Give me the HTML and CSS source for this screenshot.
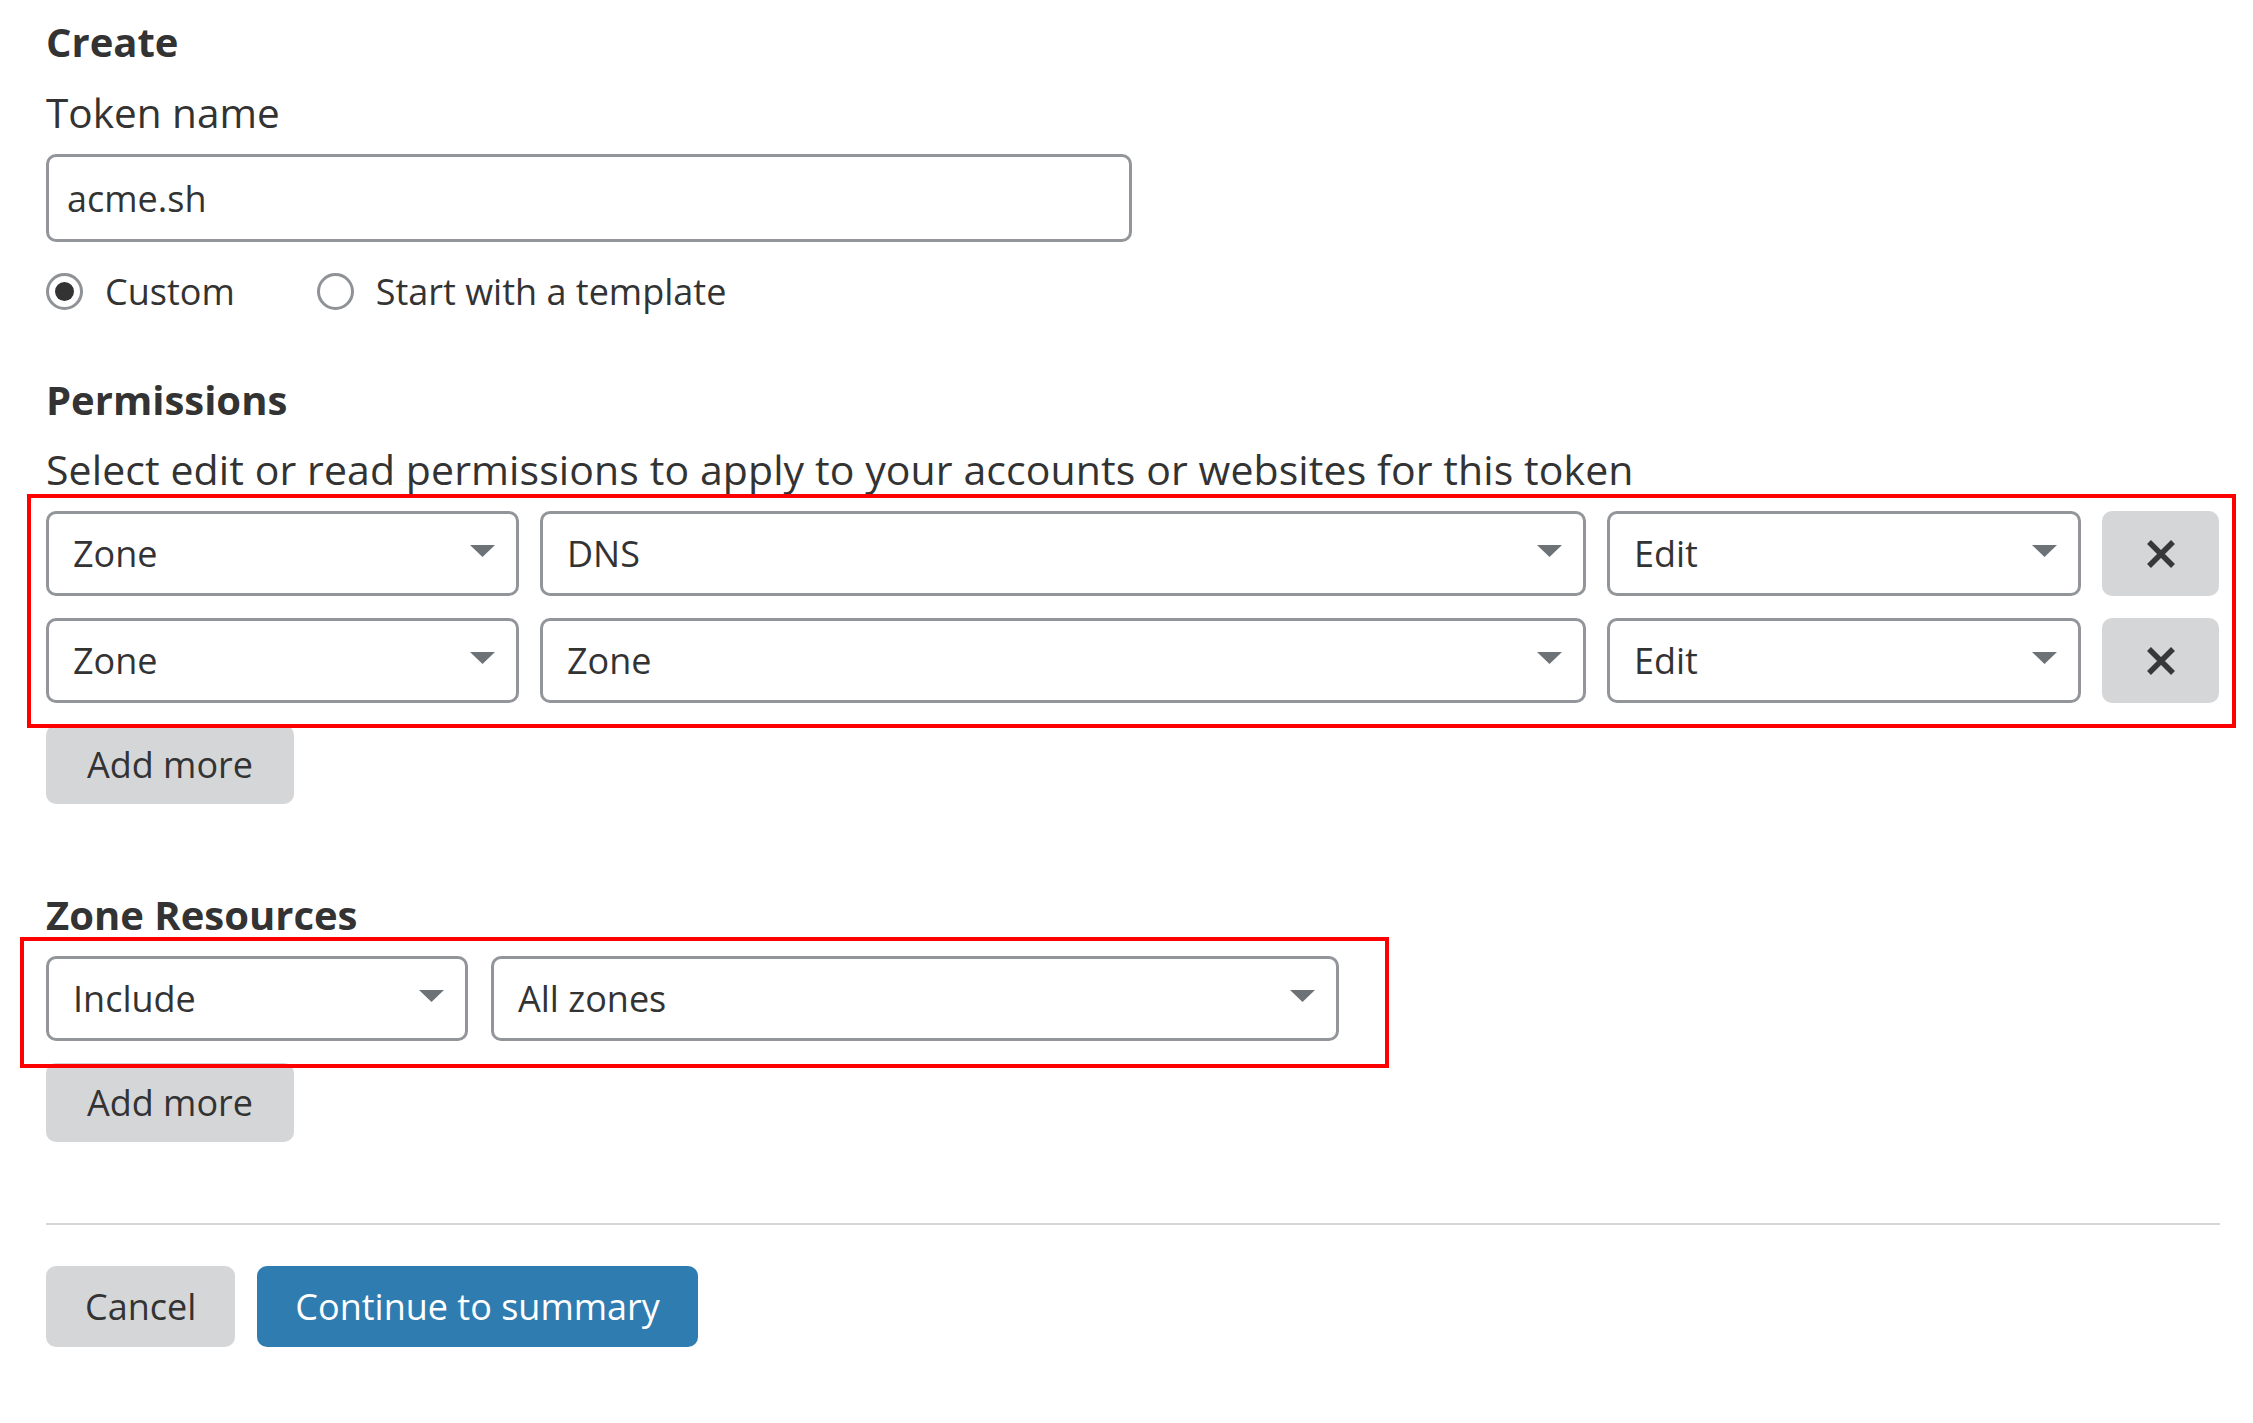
FILE: index.html
```html
<!DOCTYPE html>
<html lang="en">
<head>
<meta charset="utf-8">
<title>Create Token</title>
<link rel="stylesheet" href="styles.css">
</head>
<body>
<main class="page">
  <h2 class="heading heading-create">Create</h2>
  <div class="label">Token name</div>
  <div class="text-input">acme.sh</div>
  <div class="radios">
    <label class="radio"><span class="radio-circle checked"><span class="radio-dot"></span></span><span class="radio-label">Custom</span></label>
    <label class="radio"><span class="radio-circle"></span><span class="radio-label">Start with a template</span></label>
  </div>

  <h2 class="heading heading-perm">Permissions</h2>
  <p class="desc">Select edit or read permissions to apply to your accounts or websites for this token</p>

  <div class="perm-grid annotated annotated-perm">
    <div class="select"><span>Zone</span><svg class="caret" width="25" height="12" viewBox="0 0 25 12"><polygon points="0,0 25,0 12.5,12" fill="#6d7276"/></svg></div>
    <div class="select"><span>DNS</span><svg class="caret" width="25" height="12" viewBox="0 0 25 12"><polygon points="0,0 25,0 12.5,12" fill="#6d7276"/></svg></div>
    <div class="select"><span>Edit</span><svg class="caret" width="25" height="12" viewBox="0 0 25 12"><polygon points="0,0 25,0 12.5,12" fill="#6d7276"/></svg></div>
    <button class="btn-remove" type="button" aria-label="Remove"><svg width="30" height="30" viewBox="0 0 30 30"><path d="M3 3 L27 27 M27 3 L3 27" stroke="#36393a" stroke-width="5.5" fill="none"/></svg></button>

    <div class="select"><span>Zone</span><svg class="caret" width="25" height="12" viewBox="0 0 25 12"><polygon points="0,0 25,0 12.5,12" fill="#6d7276"/></svg></div>
    <div class="select"><span>Zone</span><svg class="caret" width="25" height="12" viewBox="0 0 25 12"><polygon points="0,0 25,0 12.5,12" fill="#6d7276"/></svg></div>
    <div class="select"><span>Edit</span><svg class="caret" width="25" height="12" viewBox="0 0 25 12"><polygon points="0,0 25,0 12.5,12" fill="#6d7276"/></svg></div>
    <button class="btn-remove" type="button" aria-label="Remove"><svg width="30" height="30" viewBox="0 0 30 30"><path d="M3 3 L27 27 M27 3 L3 27" stroke="#36393a" stroke-width="5.5" fill="none"/></svg></button>
  </div>
  <button class="btn btn-gray btn-add" type="button">Add more</button>

  <h2 class="heading heading-zone">Zone Resources</h2>
  <div class="zone-grid annotated annotated-zone">
    <div class="select"><span>Include</span><svg class="caret" width="25" height="12" viewBox="0 0 25 12"><polygon points="0,0 25,0 12.5,12" fill="#6d7276"/></svg></div>
    <div class="select"><span>All zones</span><svg class="caret" width="25" height="12" viewBox="0 0 25 12"><polygon points="0,0 25,0 12.5,12" fill="#6d7276"/></svg></div>
  </div>
  <button class="btn btn-gray btn-add" type="button">Add more</button>

  <hr class="divider">

  <div class="actions">
    <button class="btn btn-gray btn-cancel" type="button">Cancel</button>
    <button class="btn btn-blue" type="button">Continue to summary</button>
  </div>
</main>
</body>
</html>
```

FILE: styles.css
```css
* { box-sizing: border-box; }

html, body {
  margin: 0;
  padding: 0;
  background: #ffffff;
}

body {
  font-family: "Open Sans", "Noto Sans", "Liberation Sans", sans-serif;
  color: #333333;
}

.page {
  width: 2174px;
  margin-left: 46px;
  padding-top: 15px;
  padding-bottom: 60px;
}

.heading {
  margin: 0;
  font-size: 40px;
  font-weight: 700;
  line-height: 54px;
  color: #333333;
}

.label {
  margin-top: 17px;
  font-size: 40.5px;
  line-height: 54px;
}

.text-input {
  margin-top: 14px;
  width: 1086px;
  height: 88px;
  border: 3px solid #92969a;
  border-radius: 10px;
  padding-left: 18px;
  display: flex;
  align-items: center;
  font-size: 36px;
  color: #333333;
}

.radios {
  margin-top: 22px;
  height: 54px;
  display: flex;
  align-items: center;
  gap: 82px;
}

.radio {
  display: flex;
  align-items: center;
  gap: 22px;
  font-size: 36px;
}

.radio-circle {
  width: 37px;
  height: 37px;
  border: 3px solid #8f9397;
  border-radius: 50%;
  display: flex;
  align-items: center;
  justify-content: center;
}

.radio-dot {
  width: 19px;
  height: 19px;
  border-radius: 50%;
  background: #333333;
}

.heading-perm { margin-top: 55px; }

.desc {
  margin: 15px 0 0 0;
  font-size: 41px;
  letter-spacing: 0.1px;
  line-height: 54px;
}

.annotated { position: relative; }

.annotated::after {
  content: "";
  position: absolute;
  border: 4px solid #ff0000;
  pointer-events: none;
}

.annotated-perm::after {
  top: -17px;
  left: -19px;
  right: -16px;
  bottom: -25px;
}

.annotated-zone::after {
  top: -19px;
  left: -26px;
  right: -50px;
  bottom: -27px;
}

.perm-grid {
  margin-top: 15px;
  display: grid;
  grid-template-columns: 473px 1046px 474px 117px;
  grid-auto-rows: 85px;
  column-gap: 21px;
  row-gap: 22px;
}

.zone-grid {
  margin-top: 14px;
  width: 1293px;
  display: grid;
  grid-template-columns: 422px 848px;
  grid-auto-rows: 85px;
  column-gap: 23px;
}

.select {
  height: 85px;
  border: 3px solid #92969a;
  border-radius: 10px;
  padding: 0 21px 0 24px;
  display: flex;
  align-items: center;
  justify-content: space-between;
  font-size: 36px;
  color: #333333;
}

.caret {
  flex: none;
  margin-bottom: 6px;
}

.btn-remove {
  height: 85px;
  border: none;
  border-radius: 10px;
  background: #d5d6d8;
  display: flex;
  align-items: center;
  justify-content: center;
  padding: 0;
}

.btn {
  height: 79px;
  border: none;
  border-radius: 10px;
  padding: 0 39px;
  font-family: "Open Sans", "Noto Sans", "Liberation Sans", sans-serif;
  font-size: 36px;
  line-height: 1;
  white-space: nowrap;
  display: inline-flex;
  align-items: center;
  justify-content: center;
}

.btn-gray {
  background: #d5d6d8;
  color: #333333;
}

.btn-blue {
  background: #2f7cb0;
  color: #ffffff;
  padding: 0 38px;
}

.btn-add {
  display: flex;
  margin-top: 22px;
  width: 248px;
  padding: 0;
}

.heading-zone { margin-top: 84px; }

.divider {
  margin: 81px 0 0 0;
  border: none;
  height: 2px;
  background: #d6d6d6;
}

.actions {
  margin-top: 41px;
  display: flex;
  gap: 22px;
}

.actions .btn { height: 81px; }
```
